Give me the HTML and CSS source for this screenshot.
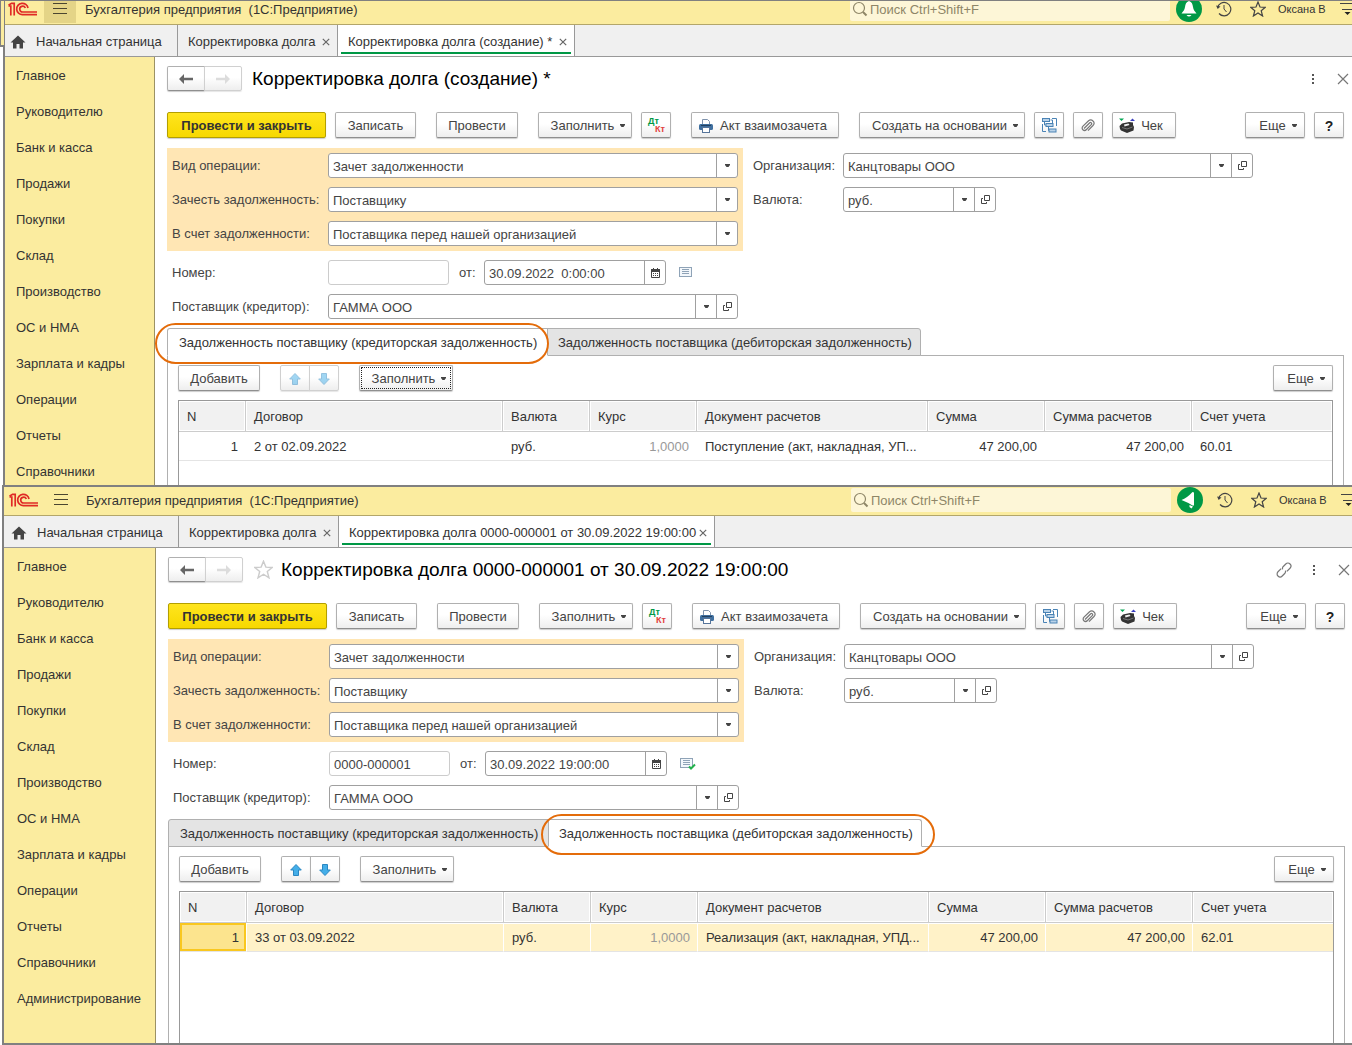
FILE: index.html
```html
<!DOCTYPE html>
<html lang="ru">
<head>
<meta charset="utf-8">
<meta name="viewport" content="width=device-width, initial-scale=1">
<title>Бухгалтерия предприятия (1С:Предприятие)</title>
<link rel="stylesheet" href="styles.css">
</head>
<body>
<svg class="sprite" aria-hidden="true">
  <symbol id="logo" viewBox="0 0 30 16"><g fill="none" stroke="#e02a26" stroke-width="1.700"><path d="M0.500 5 H2.800 V14.500 M0.500 4.200 L3.500 2.300 H6.200 V14.500"/><path d="M20 7 A5.700 5.700 0 1 0 14.500 13.700 H29"/><path d="M17.300 7 A2.900 2.900 0 1 0 14.800 11 H29"/></g></symbol>
  <symbol id="burger" viewBox="0 0 16 12"><path d="M1 0.500 H15 M1 5.500 H15 M1 10.500 H15" stroke="#4a4530" stroke-width="1"/></symbol>
  <symbol id="lens" viewBox="0 0 16 16"><circle cx="7" cy="7" r="5.500" fill="none" stroke="#8e8668" stroke-width="1.200"/><path d="M11 11 L14.500 14.500" stroke="#8e8668" stroke-width="2"/></symbol>
  <symbol id="bell" viewBox="0 0 26 26"><circle cx="13" cy="13" r="13" fill="#009846"/><path d="M13 5 C16 6 16.500 8 17 11 C17.500 14 18.500 15 20.500 17.500 H5.500 C7.500 15 8.500 14 9 11 C9.500 8 10 6 13 5 Z M10.500 19 H15.500 Q13 22 10.500 19 Z" fill="#fff"/></symbol>
  <symbol id="horn" viewBox="0 0 26 26"><circle cx="13" cy="13" r="13" fill="#009846"/><path d="M4.500 13 Q10 11 15.500 5 L17 5.500 V18.500 L15.500 18.500 Q11 15.500 4.500 13 Z M12.500 18 L16 19.500 L14.500 21.500 L12.500 20 Z" fill="#fff"/></symbol>
  <symbol id="history" viewBox="0 0 16 16"><path d="M1.500 7 A6.700 6.700 0 1 1 3 12.500" fill="none" stroke="#444" stroke-width="1.200"/><path d="M0 4.500 L1.700 8 L4.500 5.500 Z" fill="#444"/><path d="M8 4 V8 L10.500 11" fill="none" stroke="#444"/></symbol>
  <symbol id="star" viewBox="0 0 16 16"><path d="M8 1 L10 6 L15.300 6.300 L11.200 9.700 L12.600 15 L8 12 L3.400 15 L4.800 9.700 L0.700 6.300 L6 6 Z" fill="none" stroke="currentColor" stroke-width="1.200"/></symbol>
  <symbol id="home" viewBox="0 0 16 14"><path d="M8 0.500 L15.500 7.500 H13 V13.500 H9.500 V9 H6.500 V13.500 H3 V7.500 H0.500 Z" fill="#444"/></symbol>
  <symbol id="cross" viewBox="0 0 8 8"><path d="M0.800 0.800 L7.200 7.200 M7.200 0.800 L0.800 7.200" stroke="currentColor" stroke-width="1.200"/></symbol>
  <symbol id="shut" viewBox="0 0 12 12"><path d="M1 1 L11 11 M11 1 L1 11" stroke="#777" stroke-width="1.200"/></symbol>
  <symbol id="back" viewBox="0 0 16 12"><path d="M1 6 L6 1 V4.800 H15 V7.200 H6 V11 Z" fill="#666"/></symbol>
  <symbol id="forward" viewBox="0 0 16 12"><path d="M15 6 L10 1 V4.800 H1 V7.200 H10 V11 Z" fill="#dcdcdc"/></symbol>
  <symbol id="dots" viewBox="0 0 4 12"><path d="M1 1 H3 V3 H1 Z M1 5 H3 V7 H1 Z M1 9 H3 V11 H1 Z" fill="#555"/></symbol>
  <symbol id="link" viewBox="0 0 16 16"><g fill="none" stroke="#777" stroke-width="1.200" transform="rotate(-45 8 8)"><path d="M7 5 H2.500 A3 3 0 0 0 2.500 11 H6 A3 3 0 0 0 8.500 9.500"/><path d="M9 11 H13.500 A3 3 0 0 0 13.500 5 H10 A3 3 0 0 0 7.500 6.500"/></g></symbol>
  <symbol id="arrow" viewBox="0 0 5 3"><path d="M0 0 H5 V1 L3.500 3 H1.500 L0 1 Z" fill="#444"/></symbol>
  <symbol id="printer" viewBox="0 0 14 14"><path d="M3.500 5 V0.500 H8.500 L10.500 2.500 V5" fill="#fff" stroke="#7f93ad"/><rect x="0" y="5" width="14" height="6" rx="1.500" fill="#3f6f9f"/><path d="M2 6.500 H12" stroke="#23405f"/><rect x="3.500" y="8.500" width="7" height="5" fill="#fff" stroke="#56749a"/></symbol>
  <symbol id="tree" viewBox="0 0 15 15"><g fill="#b9d2e8" stroke="#4a83b5"><rect x="0.500" y="0.500" width="7" height="3"/><rect x="4" y="5.500" width="7" height="3"/><rect x="7" y="11" width="7" height="3"/></g><path d="M0.500 6 V13.500 H4 M2.500 4 V7 H4 M10 0.500 H14.500 V8 M8.500 2 H10.500 V5 M6.500 9 V12.500 H7" fill="none" stroke="#4a83b5"/></symbol>
  <symbol id="clip" viewBox="0 0 14 14"><path d="M3 9.500 L8.500 4 C9.800 2.700 11.500 4.300 10.200 5.700 L5.500 10.500 C3 13 -0.500 9.700 2 7.200 L7.300 2 C10.500 -0.800 15 3.200 12 6.500 L7 11.700" fill="none" stroke="#777" stroke-width="1.200"/></symbol>
  <symbol id="till" viewBox="0 0 16 16"><path d="M0 0.500 H5 L2.500 3 Z" fill="#00a651"/><path d="M11 3 H16 L13.500 0.500 Z" fill="#3b3fbf"/><path d="M0.500 8 L3 5.500 L10 4 L14 4.500 V7 L15 9 L14.500 12.500 L8 15 L2 12.500 L1 11 Z" fill="#333"/><path d="M5 6.500 L9.500 5.500 L10.500 7 L5.500 8.500 Z" fill="#eee"/><path d="M3 9.500 L8 11 L13.500 9" fill="none" stroke="#777"/></symbol>
  <symbol id="open" viewBox="0 0 9 9"><path d="M3.500 0.500 H8.500 V5.500 H3.500 Z M2 3.500 H0.500 V8.500 H5.500 V7" fill="none" stroke="#444"/></symbol>
  <symbol id="calendar" viewBox="0 0 9 10"><path d="M0.500 2.500 H8.500 V9.500 H0.500 Z" fill="#fff" stroke="#444"/><path d="M0 1 H9 V4 H0 Z M2 0 H3 V1 H2 Z M6 0 H7 V1 H6 Z" fill="#444"/><path d="M2 5.500 H7.500 M2 7.500 H7.500" stroke="#444" stroke-dasharray="1 1"/></symbol>
  <symbol id="list" viewBox="0 0 16 13"><rect x="0.500" y="1.500" width="12" height="9" fill="#f3f7fb" stroke="#8fa3b7"/><path d="M3 3.500 H10 M3 5.500 H10 M3 7.500 H10" stroke="#8fa3b7"/></symbol>
  <symbol id="tick" viewBox="0 0 16 13"><path d="M9 9.500 L11 11.500 L15 7.500" fill="none" stroke="#22b14c" stroke-width="2"/></symbol>
  <symbol id="up" viewBox="0 0 12 12"><path d="M6 0.500 L11.300 6 H8.500 V11.500 H3.500 V6 H0.700 Z" fill="#44aee8" stroke="#2b87c2"/></symbol>
  <symbol id="down" viewBox="0 0 12 12"><path d="M6 11.500 L11.300 6 H8.500 V0.500 H3.500 V6 H0.700 Z" fill="#44aee8" stroke="#2b87c2"/></symbol>
  <symbol id="settings" viewBox="0 0 18 12"><path d="M0 0.500 H18 M2 6.500 H16" stroke="#444"/><path d="M4.500 9 H10.500 L7.500 12 Z" fill="#222"/></symbol>
</svg>

<div class="desktop">
  <section class="window window-back">
    <header class="titlebar">
      <svg class="logo"><use href="#logo"/></svg>
      <button class="burger burger-on" aria-label="Меню"><svg><use href="#burger"/></svg></button>
      <span class="app-name">Бухгалтерия предприятия&nbsp; (1С:Предприятие)</span>
      <label class="search"><svg><use href="#lens"/></svg><input type="search" placeholder="Поиск Ctrl+Shift+F" aria-label="Поиск"></label>
      <button class="notify" aria-label="Оповещения"><svg><use href="#bell"/></svg></button>
      <button class="tool tool-history" aria-label="История"><svg><use href="#history"/></svg></button>
      <button class="tool tool-star" aria-label="Избранное"><svg><use href="#star"/></svg></button>
      <a class="user" href="#">Оксана В</a>
      <button class="settings" aria-label="Настройки"><svg><use href="#settings"/></svg></button>
    </header>
    <nav class="pages">
      <a class="page page-home" href="#"><svg class="home"><use href="#home"/></svg>Начальная страница</a>
      <a class="page" href="#">Корректировка долга<svg class="close"><use href="#cross"/></svg></a>
      <a class="page page-on" href="#">Корректировка долга (создание) *<svg class="close"><use href="#cross"/></svg></a>
    </nav>
    <div class="workspace">
      <nav class="sections">
        <a href="#">Главное</a><a href="#">Руководителю</a><a href="#">Банк и касса</a><a href="#">Продажи</a><a href="#">Покупки</a><a href="#">Склад</a><a href="#">Производство</a><a href="#">ОС и НМА</a><a href="#">Зарплата и кадры</a><a href="#">Операции</a><a href="#">Отчеты</a><a href="#">Справочники</a>
      </nav>
      <main class="document">
        <div class="heading">
          <div class="joined"><button class="btn nav-back" aria-label="Назад"><svg><use href="#back"/></svg></button><button class="btn nav-forward" aria-label="Вперед" disabled><svg><use href="#forward"/></svg></button></div>
          <h1>Корректировка долга (создание) *</h1>
          <div class="heading-tools"><button class="dots" aria-label="Еще"><svg><use href="#dots"/></svg></button><button class="shut" aria-label="Закрыть"><svg><use href="#shut"/></svg></button></div>
        </div>
        <div class="toolbar">
          <div class="group"><button class="btn btn-main">Провести и закрыть</button><button class="btn w-write">Записать</button></div>
          <button class="btn w-post">Провести</button>
          <div class="group"><button class="btn w-fill">Заполнить<svg class="caret"><use href="#arrow"/></svg></button><button class="btn w-icon dtkt"><span class="dt">Дт</span><span class="kt">Кт</span></button></div>
          <button class="btn w-act"><svg class="printer"><use href="#printer"/></svg>Акт взаимозачета</button>
          <div class="group"><button class="btn w-create">Создать на основании<svg class="caret"><use href="#arrow"/></svg></button><button class="btn w-icon" aria-label="Структура"><svg class="tree"><use href="#tree"/></svg></button><button class="btn w-icon" aria-label="Файлы"><svg class="clip"><use href="#clip"/></svg></button><button class="btn w-check"><svg class="till"><use href="#till"/></svg>Чек</button></div>
          <div class="group group-end"><button class="btn w-more">Еще<svg class="caret"><use href="#arrow"/></svg></button><button class="btn w-icon help">?</button></div>
        </div>
        <div class="form">
          <div class="operation">
            <div class="row"><label for="a-kind">Вид операции:</label><div class="field"><input id="a-kind" value="Зачет задолженности"><button aria-label="Выбрать"><svg class="caret"><use href="#arrow"/></svg></button></div></div>
            <div class="row"><label for="a-debt">Зачесть задолженность:</label><div class="field"><input id="a-debt" value="Поставщику"><button aria-label="Выбрать"><svg class="caret"><use href="#arrow"/></svg></button></div></div>
            <div class="row"><label for="a-against">В счет задолженности:</label><div class="field"><input id="a-against" value="Поставщика перед нашей организацией"><button aria-label="Выбрать"><svg class="caret"><use href="#arrow"/></svg></button></div></div>
          </div>
          <div class="company">
            <div class="row"><label for="a-org">Организация:</label><div class="field"><input id="a-org" value="Канцтовары ООО"><button aria-label="Выбрать"><svg class="caret"><use href="#arrow"/></svg></button><button aria-label="Открыть"><svg class="open"><use href="#open"/></svg></button></div></div>
            <div class="row"><label for="a-cur">Валюта:</label><div class="field field-currency"><input id="a-cur" value="руб."><button aria-label="Выбрать"><svg class="caret"><use href="#arrow"/></svg></button><button aria-label="Открыть"><svg class="open"><use href="#open"/></svg></button></div></div>
          </div>
        </div>
        <div class="details">
          <div class="row"><label for="a-num">Номер:</label><div class="field field-number"><input id="a-num" value=""></div><label class="from" for="a-date">от:</label><div class="field field-date"><input id="a-date" value="30.09.2022  0:00:00"><button aria-label="Календарь"><svg class="calendar"><use href="#calendar"/></svg></button></div><svg class="list"><use href="#list"/></svg></div>
          <div class="row"><label for="a-sup">Поставщик (кредитор):</label><div class="field"><input id="a-sup" value="ГАММА ООО"><button aria-label="Выбрать"><svg class="caret"><use href="#arrow"/></svg></button><button aria-label="Открыть"><svg class="open"><use href="#open"/></svg></button></div></div>
        </div>
        <div class="tabs" role="tablist">
          <button class="tab tab-credit tab-on" role="tab" aria-selected="true">Задолженность поставщику (кредиторская задолженность)<span class="mark mark-credit"></span></button>
          <button class="tab tab-debit" role="tab" aria-selected="false">Задолженность поставщика (дебиторская задолженность)</button>
        </div>
        <div class="panel">
          <div class="toolbar">
            <button class="btn w-add">Добавить</button>
            <div class="joined"><button class="btn w-icon" aria-label="Вверх" disabled><svg class="move"><use href="#up"/></svg></button><button class="btn w-icon" aria-label="Вниз" disabled><svg class="move"><use href="#down"/></svg></button></div>
            <button class="btn w-fill focused">Заполнить<svg class="caret"><use href="#arrow"/></svg></button>
            <div class="group group-end"><button class="btn w-more">Еще<svg class="caret"><use href="#arrow"/></svg></button></div>
          </div>
          <div class="grid">
            <table>
              <colgroup><col class="c-n"><col class="c-contract"><col class="c-currency"><col class="c-rate"><col class="c-doc"><col class="c-sum"><col class="c-total"><col></colgroup>
              <thead><tr><th>N</th><th>Договор</th><th>Валюта</th><th>Курс</th><th>Документ расчетов</th><th>Сумма</th><th>Сумма расчетов</th><th>Счет учета</th></tr></thead>
              <tbody><tr><td class="num">1</td><td>2 от 02.09.2022</td><td>руб.</td><td class="num dim">1,0000</td><td>Поступление (акт, накладная, УП...</td><td class="num">47 200,00</td><td class="num">47 200,00</td><td>60.01</td></tr></tbody>
            </table>
          </div>
        </div>
      </main>
    </div>
  </section>

  <section class="window window-front">
    <header class="titlebar">
      <svg class="logo"><use href="#logo"/></svg>
      <button class="burger" aria-label="Меню"><svg><use href="#burger"/></svg></button>
      <span class="app-name">Бухгалтерия предприятия&nbsp; (1С:Предприятие)</span>
      <label class="search"><svg><use href="#lens"/></svg><input type="search" placeholder="Поиск Ctrl+Shift+F" aria-label="Поиск"></label>
      <button class="notify" aria-label="Оповещения"><svg><use href="#horn"/></svg></button>
      <button class="tool tool-history" aria-label="История"><svg><use href="#history"/></svg></button>
      <button class="tool tool-star" aria-label="Избранное"><svg><use href="#star"/></svg></button>
      <a class="user" href="#">Оксана В</a>
      <button class="settings" aria-label="Настройки"><svg><use href="#settings"/></svg></button>
    </header>
    <nav class="pages">
      <a class="page page-home" href="#"><svg class="home"><use href="#home"/></svg>Начальная страница</a>
      <a class="page" href="#">Корректировка долга<svg class="close"><use href="#cross"/></svg></a>
      <a class="page page-on page-long" href="#">Корректировка долга 0000-000001 от 30.09.2022 19:00:00<svg class="close"><use href="#cross"/></svg></a>
    </nav>
    <div class="workspace">
      <nav class="sections">
        <a href="#">Главное</a><a href="#">Руководителю</a><a href="#">Банк и касса</a><a href="#">Продажи</a><a href="#">Покупки</a><a href="#">Склад</a><a href="#">Производство</a><a href="#">ОС и НМА</a><a href="#">Зарплата и кадры</a><a href="#">Операции</a><a href="#">Отчеты</a><a href="#">Справочники</a><a href="#">Администрирование</a>
      </nav>
      <main class="document">
        <div class="heading">
          <div class="joined"><button class="btn nav-back" aria-label="Назад"><svg><use href="#back"/></svg></button><button class="btn nav-forward" aria-label="Вперед" disabled><svg><use href="#forward"/></svg></button></div>
          <button class="favourite" aria-label="В избранное"><svg><use href="#star"/></svg></button>
          <h1>Корректировка долга 0000-000001 от 30.09.2022 19:00:00</h1>
          <div class="heading-tools"><button class="link" aria-label="Ссылка"><svg><use href="#link"/></svg></button><button class="dots" aria-label="Еще"><svg><use href="#dots"/></svg></button><button class="shut" aria-label="Закрыть"><svg><use href="#shut"/></svg></button></div>
        </div>
        <div class="toolbar">
          <div class="group"><button class="btn btn-main">Провести и закрыть</button><button class="btn w-write">Записать</button></div>
          <button class="btn w-post">Провести</button>
          <div class="group"><button class="btn w-fill">Заполнить<svg class="caret"><use href="#arrow"/></svg></button><button class="btn w-icon dtkt"><span class="dt">Дт</span><span class="kt">Кт</span></button></div>
          <button class="btn w-act"><svg class="printer"><use href="#printer"/></svg>Акт взаимозачета</button>
          <div class="group"><button class="btn w-create">Создать на основании<svg class="caret"><use href="#arrow"/></svg></button><button class="btn w-icon" aria-label="Структура"><svg class="tree"><use href="#tree"/></svg></button><button class="btn w-icon" aria-label="Файлы"><svg class="clip"><use href="#clip"/></svg></button><button class="btn w-check"><svg class="till"><use href="#till"/></svg>Чек</button></div>
          <div class="group group-end"><button class="btn w-more">Еще<svg class="caret"><use href="#arrow"/></svg></button><button class="btn w-icon help">?</button></div>
        </div>
        <div class="form">
          <div class="operation">
            <div class="row"><label for="b-kind">Вид операции:</label><div class="field"><input id="b-kind" value="Зачет задолженности"><button aria-label="Выбрать"><svg class="caret"><use href="#arrow"/></svg></button></div></div>
            <div class="row"><label for="b-debt">Зачесть задолженность:</label><div class="field"><input id="b-debt" value="Поставщику"><button aria-label="Выбрать"><svg class="caret"><use href="#arrow"/></svg></button></div></div>
            <div class="row"><label for="b-against">В счет задолженности:</label><div class="field"><input id="b-against" value="Поставщика перед нашей организацией"><button aria-label="Выбрать"><svg class="caret"><use href="#arrow"/></svg></button></div></div>
          </div>
          <div class="company">
            <div class="row"><label for="b-org">Организация:</label><div class="field"><input id="b-org" value="Канцтовары ООО"><button aria-label="Выбрать"><svg class="caret"><use href="#arrow"/></svg></button><button aria-label="Открыть"><svg class="open"><use href="#open"/></svg></button></div></div>
            <div class="row"><label for="b-cur">Валюта:</label><div class="field field-currency"><input id="b-cur" value="руб."><button aria-label="Выбрать"><svg class="caret"><use href="#arrow"/></svg></button><button aria-label="Открыть"><svg class="open"><use href="#open"/></svg></button></div></div>
          </div>
        </div>
        <div class="details">
          <div class="row"><label for="b-num">Номер:</label><div class="field field-number"><input id="b-num" value="0000-000001"></div><label class="from" for="b-date">от:</label><div class="field field-date"><input id="b-date" value="30.09.2022 19:00:00"><button aria-label="Календарь"><svg class="calendar"><use href="#calendar"/></svg></button></div><svg class="list"><use href="#list"/><use href="#tick"/></svg></div>
          <div class="row"><label for="b-sup">Поставщик (кредитор):</label><div class="field"><input id="b-sup" value="ГАММА ООО"><button aria-label="Выбрать"><svg class="caret"><use href="#arrow"/></svg></button><button aria-label="Открыть"><svg class="open"><use href="#open"/></svg></button></div></div>
        </div>
        <div class="tabs" role="tablist">
          <button class="tab tab-credit" role="tab" aria-selected="false">Задолженность поставщику (кредиторская задолженность)</button>
          <button class="tab tab-debit tab-on" role="tab" aria-selected="true">Задолженность поставщика (дебиторская задолженность)<span class="mark mark-debit"></span></button>
        </div>
        <div class="panel">
          <div class="toolbar">
            <button class="btn w-add">Добавить</button>
            <div class="joined"><button class="btn w-icon" aria-label="Вверх"><svg class="move"><use href="#up"/></svg></button><button class="btn w-icon" aria-label="Вниз"><svg class="move"><use href="#down"/></svg></button></div>
            <button class="btn w-fill">Заполнить<svg class="caret"><use href="#arrow"/></svg></button>
            <div class="group group-end"><button class="btn w-more">Еще<svg class="caret"><use href="#arrow"/></svg></button></div>
          </div>
          <div class="grid">
            <table>
              <colgroup><col class="c-n"><col class="c-contract"><col class="c-currency"><col class="c-rate"><col class="c-doc"><col class="c-sum"><col class="c-total"><col></colgroup>
              <thead><tr><th>N</th><th>Договор</th><th>Валюта</th><th>Курс</th><th>Документ расчетов</th><th>Сумма</th><th>Сумма расчетов</th><th>Счет учета</th></tr></thead>
              <tbody><tr class="selected"><td class="num current">1</td><td>33 от 03.09.2022</td><td>руб.</td><td class="num dim">1,0000</td><td>Реализация (акт, накладная, УПД...</td><td class="num">47 200,00</td><td class="num">47 200,00</td><td>62.01</td></tr></tbody>
            </table>
          </div>
        </div>
      </main>
    </div>
  </section>
</div>
</body>
</html>
```
FILE: styles.css
```css
* { box-sizing: border-box; }
body { margin: 0; background: #fff; color: #333; font: 13px/16px "Liberation Sans", Arial, sans-serif; }
button, input { font: inherit; color: inherit; margin: 0; padding: 0; border: 0; background: none; }
a { color: inherit; text-decoration: none; }
svg { display: block; flex: none; }
.sprite { position: absolute; width: 0; height: 0; }

.desktop { display: flex; flex-direction: column; min-height: 100vh; overflow: hidden; position: relative; }
.desktop::before { content: ""; position: absolute; left: 0; top: 0; width: 3px; height: 44px; background: #fbec9f; border: solid #808080; border-width: 1px 0 2px 1px; }

.window { display: flex; flex-direction: column; overflow: hidden; border: 0 solid #808080; }
.window-back { --lead: 3px; --trail: 8px; margin-left: 3px; border-width: 1px 0 0 2px; }
.window-front { --lead: 5px; --trail: 7px; flex: 1; margin-left: 2px; border-width: 2px 0 2px 2px; position: relative; }

.titlebar { display: flex; align-items: center; flex: none; height: 29px; padding: 0 0 2px var(--lead); background: #fbec9f; border-bottom: 1px solid #b3a66a; }
.window-back .titlebar { margin-top: -5px; }
.logo { width: 30px; height: 16px; }
.burger { display: grid; place-items: center; width: 32px; height: 28px; margin-left: 6px; }
.burger-on { background: #e4d487; }
.burger svg { width: 16px; height: 12px; }
.app-name { margin-left: 9px; padding-top: 2px; white-space: nowrap; }
.search { display: flex; align-items: center; gap: 2px; width: 320px; height: 24px; margin-left: auto; padding-left: 2px; border-radius: 2px; background: #fdf6d7; }
.search svg { width: 16px; height: 16px; }
.search input { flex: 1; min-width: 0; padding-top: 1px; outline: 0; appearance: none; }
.search input::placeholder { color: #8e8668; opacity: 1; }
.notify { margin-left: 6px; }
.notify svg { width: 26px; height: 26px; }
.tool svg { width: 16px; height: 16px; }
.tool-history { margin-left: 14px; }
.tool-star { margin-left: 18px; color: #444; }
.user { width: 50px; margin-left: 12px; font-size: 11px; white-space: nowrap; }
.settings { width: calc(var(--trail) + 4px); margin-left: 12px; }
.settings svg { width: 18px; height: 12px; }

.pages { display: flex; flex: none; height: 32px; background: #f0f0f0; border-bottom: 1px solid #999; }
.page { display: flex; align-items: center; width: 160px; padding: 2px 7px 0 10px; border-right: 1px solid #999; white-space: nowrap; }
.page-home { width: calc(170px + var(--lead)); padding-left: calc(var(--lead) + 2px); gap: 10px; }
.home { width: 16px; height: 14px; }
.close { width: 8px; height: 8px; margin-left: auto; color: #666; }
.page-on { width: 237px; background: linear-gradient(#009846, #009846) 3px 27px / calc(100% - 6px) 2px no-repeat #fff; }
.page-long { width: 376px; }

.workspace { display: flex; flex: 1; }
.sections { display: flex; flex-direction: column; gap: 20px; flex: none; width: calc(147px + var(--lead)); padding: 11px 8px 5px calc(var(--lead) + 8px); background: #fbec9f; border-right: 1px solid #9c9264; }
.document { display: flex; flex-direction: column; flex: 1; min-width: 0; padding: 9px var(--trail) 0 12px; }

.heading { display: flex; align-items: center; height: 25px; margin-bottom: 21px; }
.heading h1 { margin: 0 0 0 10px; font-size: 19px; line-height: 25px; font-weight: normal; color: #000; white-space: nowrap; }
.favourite { margin-left: 11px; color: #ccc; }
.favourite svg { width: 19px; height: 19px; }
.favourite + h1 { margin-left: 8px; }
.heading-tools { display: flex; align-items: center; margin-left: auto; margin-right: -5px; }
.link svg { width: 16px; height: 16px; margin-right: 20px; }
.dots svg { width: 4px; height: 12px; }
.shut svg { width: 12px; height: 12px; margin-left: 22px; }

.btn { display: flex; align-items: center; justify-content: center; height: 26px; padding-top: 1px; border: 1px solid #b0b0b0; border-bottom-color: #8f8f8f; border-radius: 2px; background: linear-gradient(#fff, #fff 45%, #eee); box-shadow: 0 1px 1px #ccc; color: #444; white-space: nowrap; }
.btn:disabled { border-color: #d0d0d0; box-shadow: 0 1px 1px #e6e6e6; }
.btn:disabled .move { opacity: 0.5; }
.joined { display: flex; }
.joined .btn:first-child { border-radius: 2px 0 0 2px; }
.joined .btn + .btn { margin-left: -1px; border-radius: 0 2px 2px 0; }
.btn.nav-back, .btn.nav-forward { width: 38px; height: 25px; padding-top: 0; }
.nav-back svg, .nav-forward svg { width: 16px; height: 12px; }
.toolbar { display: flex; gap: 20px; }
.group { display: flex; gap: 9px; }
.group-end { margin-left: auto; }
.btn-main { width: 159px; border-color: #b39f00; background: linear-gradient(#ffe51e, #f7d800); color: #333; font-weight: bold; }
.w-add { width: 82px; }
.w-write { width: 81px; }
.w-post { width: 82px; }
.w-fill { width: 94px; padding-left: 6px; }
.w-icon { width: 30px; }
.w-act { width: 148px; gap: 7px; padding-right: 4px; }
.w-create { width: 166px; padding-left: 6px; }
.w-check { width: 64px; gap: 6px; padding-right: 6px; }
.w-more { width: 60px; padding-left: 6px; }
.help { font-size: 14px; font-weight: bold; color: #222; }
.caret { width: 5px; height: 3px; }
.btn .caret { margin-left: 6px; }
.btn.dtkt { flex-direction: column; align-items: stretch; padding: 0 5px 0 6px; font: bold 9px/8px "Liberation Sans", Arial, sans-serif; }
.dt { text-align: left; color: #009846; }
.kt { text-align: right; color: #e2403c; }
.printer, .clip { width: 14px; height: 14px; }
.tree { width: 15px; height: 15px; }
.till { width: 16px; height: 16px; }
.move { width: 12px; height: 12px; }
.focused { outline: 1px dotted #222; outline-offset: -3px; }

.form { display: flex; gap: 10px; margin-top: 10px; }
.operation { flex: 0 1 576px; padding: 5px; background: #ffe6b4; }
.company { flex: 0 1 500px; padding-top: 5px; }
.operation, .company, .details { display: flex; flex-direction: column; gap: 9px; }
.details { width: 571px; max-width: 100%; margin: 9px 0; padding-left: 5px; }
.row { display: flex; align-items: center; color: #444; }
.row label { flex: none; width: 156px; white-space: nowrap; }
.company label { width: 90px; }
.row label.from { width: 35px; padding-left: 10px; }
.field { display: flex; flex: 1; min-width: 0; height: 25px; border: 1px solid #a0a0a0; border-radius: 3px; background: #fff; }
.field input { flex: 1; width: 0; min-width: 0; padding: 2px 0 0 4px; outline: 0; }
.field button { display: grid; place-items: center; flex: none; width: 21px; border-left: 1px solid #a0a0a0; }
.field-currency { flex: 0 0 153px; }
.field-number { flex: 0 0 121px; border-color: #ccc; }
.field-date { flex: 0 0 182px; }
.open { width: 9px; height: 9px; }
.calendar { width: 9px; height: 10px; }
.list { width: 16px; height: 13px; margin-left: 13px; }

.tabs { display: flex; height: 28px; margin-bottom: -1px; position: relative; }
.tab { position: relative; height: 28px; padding: 1px 0 0 11px; border: 1px solid #b0b0b0; background: #e4e4e4; text-align: left; white-space: nowrap; }
.tab-credit { width: 381px; border-radius: 3px 0 0 0; }
.tab-debit { width: 374px; margin-left: -1px; padding-left: 10px; border-radius: 0 3px 0 0; }
.tab-on { z-index: 1; background: #fff; border-bottom-color: #fff; }
.mark { position: absolute; border: 2px solid #e46c0a; border-radius: 22px; pointer-events: none; }
.mark-credit { inset: -6px -2px -9px -13px; }
.mark-debit { inset: -6px -14px -9px -8px; }

.panel { display: flex; flex-direction: column; flex: 1; padding: 9px 10px 0; border: 1px solid #b0b0b0; border-bottom: 0; }
.grid { flex: 1; margin-top: 9px; border: 1px solid #999; border-bottom: 0; }
table { width: 100%; table-layout: fixed; border-collapse: separate; border-spacing: 0; }
.c-n { width: 67px; }
.c-contract { width: 257px; }
.c-currency { width: 87px; }
.c-rate { width: 107px; }
.c-doc { width: 231px; }
.c-sum { width: 117px; }
.c-total { width: 147px; }
th, td { padding: 1px 8px 0; text-align: left; font-weight: normal; white-space: nowrap; overflow: hidden; }
th { height: 31px; background: #f1f1f1; border: solid #ccc; border-width: 0 1px 1px 0; box-shadow: inset 0 0 0 1px #fff; }
th:last-child { border-right: 0; }
td { height: 29px; padding-top: 2px; border-bottom: 1px solid #e4e4e4; }
.num { text-align: right; }
.dim { color: #999; }
.selected td { background: #fff2c8; border-right: 1px solid #fff; box-shadow: inset 0 1px #fff; }
.selected td:last-child { border-right: 0; }
.selected .num { padding-right: 7px; }
.selected td.current { background: #fce48e; box-shadow: inset 0 0 0 2px #f9c71f; }
```
